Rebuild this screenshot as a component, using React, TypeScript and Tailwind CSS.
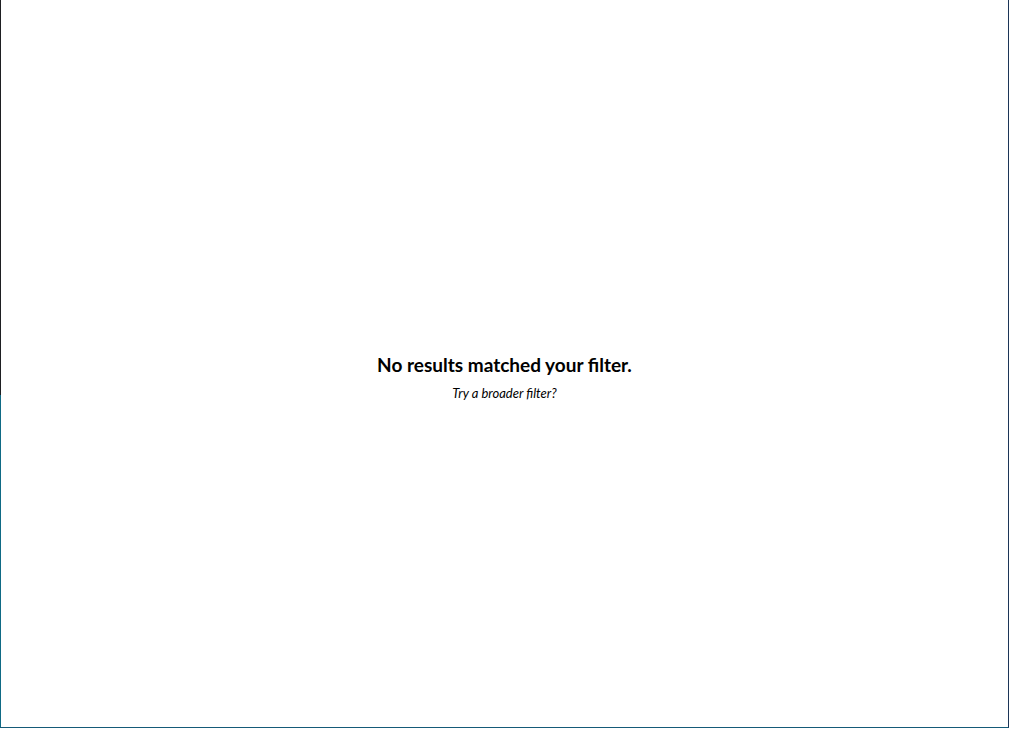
export default function App() {
  return (
    <div className="w-[1010px] h-[729px] bg-white flex">
      <div className="w-[1009px] h-[728px] flex border-b border-r border-b-[#155a78] border-r-[#1c3557]">
        <div className="w-px flex flex-col shrink-0">
          <div className="h-[395px] bg-[#1e1f22]" />
          <div className="flex-1 bg-[#0f6a85]" />
        </div>
        <div className="flex-1 flex flex-col items-center justify-center pt-[28px] font-['Lato','Noto_Sans',sans-serif] text-black">
          <h1 className="text-[19px] font-bold leading-[24px]">No results matched your filter.</h1>
          <p className="mt-[8px] text-[13px] italic leading-[17px]">Try a broader filter?</p>
        </div>
      </div>
    </div>
  )
}
